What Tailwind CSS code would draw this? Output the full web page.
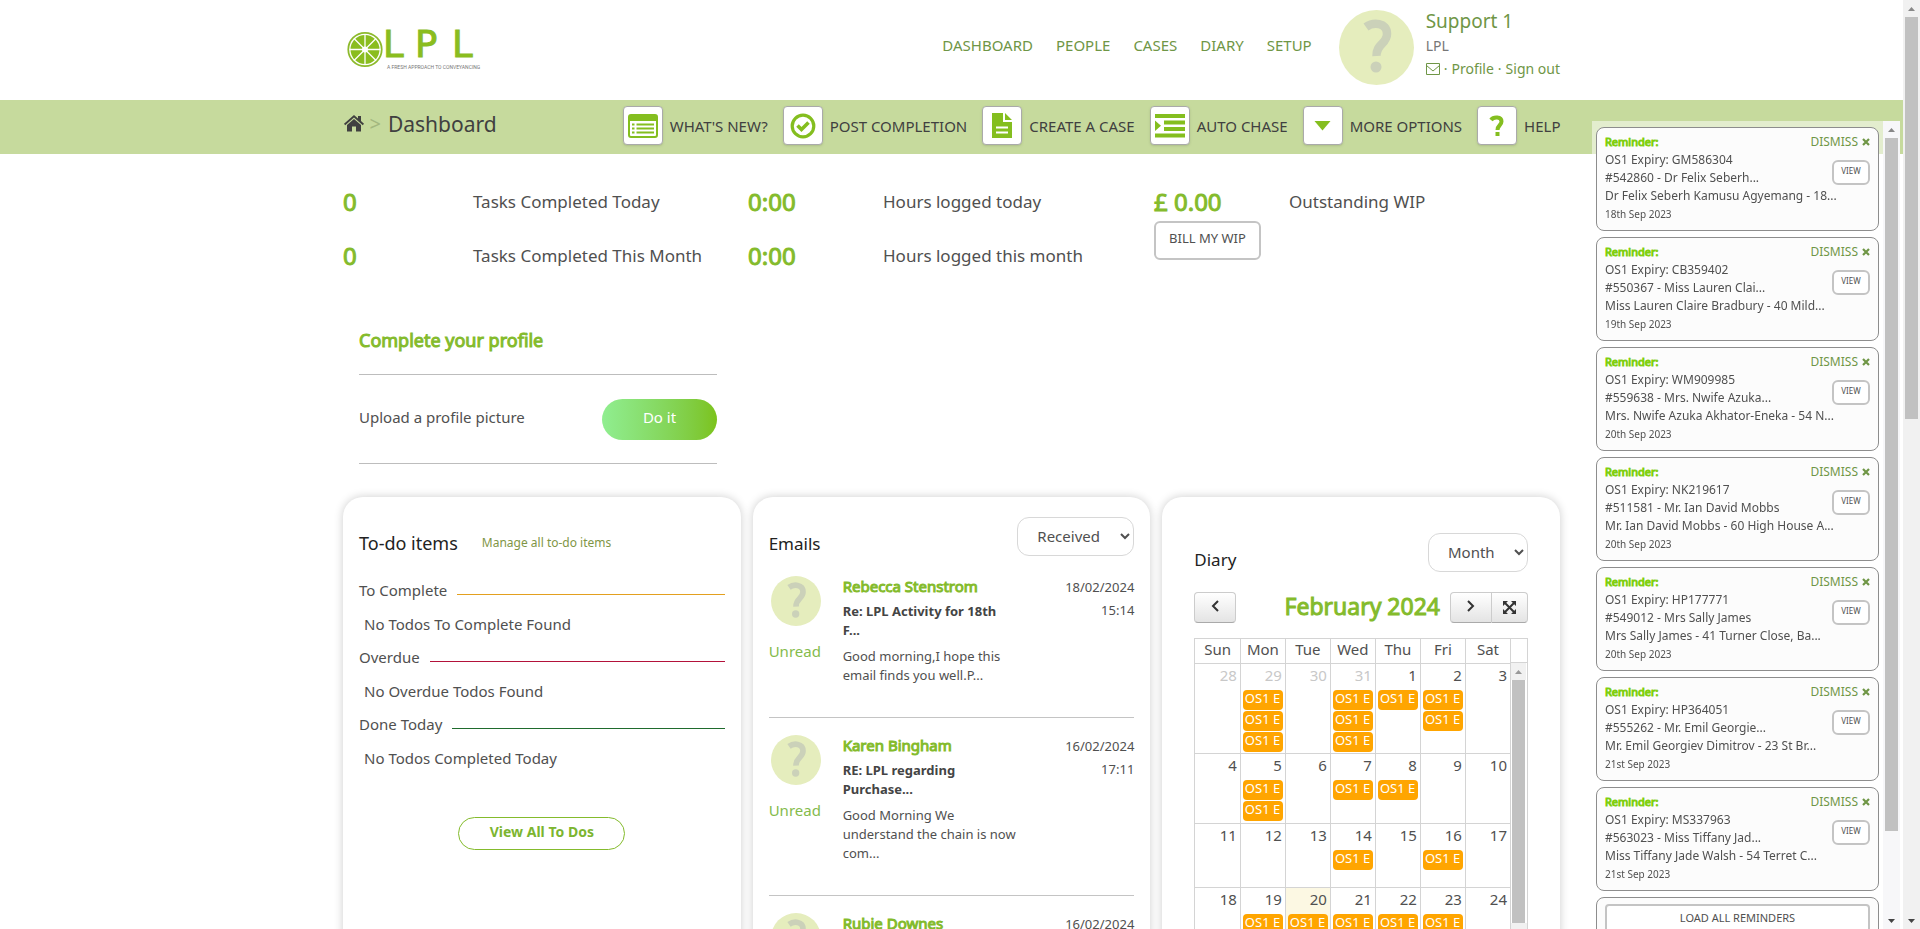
<!DOCTYPE html>
<html lang="en">
<head>
<meta charset="utf-8">
<title>LPL - Dashboard</title>
<script src="https://cdn.jsdelivr.net/npm/@tailwindcss/browser@4"></script>
</head>
<body class="h-screen overflow-hidden bg-white pr-[17px] font-['Noto_Sans','Open_Sans',sans-serif] text-[15px] leading-5 text-[#505050]">
<svg class="hidden">
  <symbol id="avatar" viewBox="0 0 75 75">
    <circle cx="37.5" cy="37.5" r="37.5" fill="#e5edbd"/>
    <path d="M27 17C34 12 48 12 48 24C48 34 37 34 37.500 46" fill="none" stroke="#cbd1b9" stroke-width="8.500"/>
    <circle cx="37" cy="57" r="5.500" fill="#cbd1b9"/>
  </symbol>
  <symbol id="cross" viewBox="0 0 8 8"><path d="M1 1L7 7M7 1L1 7" stroke="currentColor" stroke-width="2.200"/></symbol>
</svg>

<header class="mx-auto flex h-[100px] max-w-[1217px] items-start">
  <a href="#" aria-label="LPL home" class="mt-[29px] ml-1 flex">
    <svg width="36" height="42" viewBox="0 0 36 42">
      <circle cx="18" cy="20.500" r="16.700" fill="none" stroke="#8dba2c" stroke-width="1.800"/>
      <circle cx="18" cy="20.500" r="14.500" fill="#8abd1f"/>
      <g stroke="#fff" stroke-width="1.300">
        <path d="M18 5V36M2.500 20.500H33.500M7 9.500L29 31.500M29 9.500L7 31.500"/>
      </g>
      <circle cx="18" cy="20.500" r="3" fill="#fff"/>
    </svg>
    <div>
      <div class="flex font-['DejaVu_Sans'] text-[37px] leading-8 text-[#8abd1f] [-webkit-text-stroke:1px]"><span class="w-8">L</span><span class="w-[37px]">P</span><span>L</span></div>
      <p class="mt-[3px] ml-1 font-[Roboto] text-[5px] leading-[6px] whitespace-nowrap text-[#777]">A FRESH APPROACH TO CONVEYANCING</p>
    </div>
  </a>
  <nav class="mt-[35px] ml-auto flex gap-[23px] text-[#6f9646]">
    <a href="#">DASHBOARD</a><a href="#">PEOPLE</a><a href="#">CASES</a><a href="#">DIARY</a><a href="#">SETUP</a>
  </nav>
  <svg class="mt-[10px] ml-[27px] size-[75px]"><use href="#avatar"/></svg>
  <div class="ml-3 pt-2">
    <p class="text-[19px] leading-[26px] text-[#6f9646]">Support 1</p>
    <p class="text-sm leading-6 text-[#777]">LPL</p>
    <p class="flex items-center gap-1 text-sm leading-[22px] text-[#6f9646]">
      <a href="#" aria-label="Messages"><svg width="14" height="12" viewBox="0 0 14 12" fill="none" stroke="currentColor"><path d="M.5.5H13.500V11.500H.5ZM.5 2.500L7 8L13.500 2.500"/></svg></a>
      <span>·</span><a href="#">Profile</a><span>·</span><a href="#">Sign out</a>
    </p>
  </div>
</header>

<div class="-mr-[1px] bg-[#c6da9d]">
  <div class="mx-auto flex h-[54px] max-w-[1217px] items-center pb-[3px] text-[#404040]">
    <div class="flex items-center pb-1">
      <a href="#" aria-label="Home"><svg width="20" height="17" viewBox="0 0 20 17" fill="currentColor"><path d="M10 0L0 8.800L1.200 10.200L10 2.600L18.800 10.200L20 8.800L17 6.100V1H14V3.500ZM10 4L3 10V16.500H8V11.500H12V16.500H17V10Z"/></svg></a>
      <span class="ml-[6px] text-xl text-[#a3b77f]">&gt;</span>
      <h1 class="ml-[7px] text-[21px]">Dashboard</h1>
    </div>
    <div class="ml-auto flex gap-[15px]">
      <button class="flex items-center gap-[7px]"><span class="flex h-[39px] w-10 items-center justify-center rounded-sm border border-[#aaa] bg-white shadow"><svg width="30" height="24" viewBox="0 0 30 24"><rect x="1" y="1" width="28" height="22" rx="2" fill="none" stroke="#84be1f" stroke-width="2"/><path d="M1 2H29V7H1Z" fill="#84be1f"/><path d="M4 10.500H6.500M4 14.500H6.500M4 18.500H6.500M8.500 10.500H26M8.500 14.500H26M8.500 18.500H26" stroke="#84be1f" stroke-width="2"/></svg></span>WHAT'S NEW?</button>
      <button class="flex items-center gap-[7px]"><span class="flex h-[39px] w-10 items-center justify-center rounded-sm border border-[#aaa] bg-white shadow"><svg width="26" height="26" viewBox="0 0 26 26" fill="none" stroke="#84be1f"><circle cx="13" cy="13" r="10.800" stroke-width="3.200"/><path d="M7.500 12.500L11.500 16.500L18.500 9.500" stroke-width="3.600"/></svg></span>POST COMPLETION</button>
      <button class="flex items-center gap-[7px]"><span class="flex h-[39px] w-10 items-center justify-center rounded-sm border border-[#aaa] bg-white shadow"><svg width="22" height="25" viewBox="0 0 22 25" fill="#84be1f"><path d="M1 0H12V9H21V25H1ZM14 0L21 7H14Z"/><path d="M5 14.500H17M5 19.500H17" stroke="#fff" stroke-width="2"/></svg></span>CREATE A CASE</button>
      <button class="flex items-center gap-[7px]"><span class="flex h-[39px] w-10 items-center justify-center rounded-sm border border-[#aaa] bg-white shadow"><svg width="30" height="24" viewBox="0 0 30 24" fill="#84be1f"><path d="M0 0H30V4H0ZM9 6.500H30V10.500H9ZM9 13H30V17H9ZM0 19.500H30V23.500H0ZM0 6.500L6 11.700L0 17Z"/></svg></span>AUTO CHASE</button>
      <button class="flex items-center gap-[7px]"><span class="flex h-[39px] w-10 items-center justify-center rounded-sm border border-[#aaa] bg-white shadow"><svg width="17" height="10" viewBox="0 0 17 10" fill="#84be1f"><path d="M.5 0H16.500L8.500 9.500Z"/></svg></span>MORE OPTIONS</button>
      <button class="flex items-center gap-[7px]"><span class="flex h-[39px] w-10 items-center justify-center rounded-sm border border-[#aaa] bg-white shadow"><svg width="16" height="22" viewBox="0 0 16 22"><path d="M2 5C4.500 1.500 12.500 1.500 12.500 6.500C12.500 10.500 8.500 10 8.500 15" fill="none" stroke="#84be1f" stroke-width="4"/><path d="M6.500 17H10.500V21H6.500Z" fill="#84be1f"/></svg></span>HELP</button>
    </div>
  </div>
</div>

<main class="mx-auto max-w-[1217px]">
  <section class="flex pt-[29px] text-[17px]">
    <dl class="grid w-[405px] grid-cols-[130px_1fr] gap-y-4">
      <dt class="text-2xl leading-[38px] text-[#84bb2c] [-webkit-text-stroke:1px]">0</dt><dd class="leading-[38px]">Tasks Completed Today</dd>
      <dt class="text-2xl leading-[38px] text-[#84bb2c] [-webkit-text-stroke:1px]">0</dt><dd class="leading-[38px]">Tasks Completed This Month</dd>
    </dl>
    <dl class="grid w-[406px] grid-cols-[135px_1fr] gap-y-4">
      <dt class="text-2xl leading-[38px] text-[#84bb2c] [-webkit-text-stroke:1px]">0:00</dt><dd class="leading-[38px]">Hours logged today</dd>
      <dt class="text-2xl leading-[38px] text-[#84bb2c] [-webkit-text-stroke:1px]">0:00</dt><dd class="leading-[38px]">Hours logged this month</dd>
    </dl>
    <dl class="grid w-[405px] grid-cols-[135px_1fr] content-start">
      <dt class="text-2xl leading-[38px] text-[#84bb2c] [-webkit-text-stroke:1px]">£ 0.00</dt><dd class="leading-[38px]">Outstanding WIP</dd>
      <dd><button class="block h-[39px] w-[107px] rounded-md border-2 border-[#c4c4c4] pb-1 text-[13px] leading-none">BILL MY WIP</button></dd>
    </dl>
  </section>

  <section class="mt-[53px] ml-4 w-[358px]">
    <h2 class="border-b border-[#bdbdbd] pb-[22px] text-lg leading-6 text-[#84bb2c] [-webkit-text-stroke:1px]">Complete your profile</h2>
    <div class="flex h-[89px] items-center justify-between border-b border-[#bdbdbd]">
      <span class="pb-1">Upload a profile picture</span>
      <button class="h-[41px] w-[115px] rounded-full bg-linear-to-r from-[#90ee90] to-[#7cc31a] pb-1 text-white">Do it</button>
    </div>
  </section>

  <div class="mt-[33px] grid grid-cols-3 gap-3">
    <section class="h-[600px] rounded-[20px] bg-white px-4 pt-[34px] shadow-[0_0_10px_rgba(0,0,0,0.2)]">
      <div class="flex items-center gap-6"><h2 class="text-lg leading-6 text-[#222]">To-do items</h2><a href="#" class="text-xs text-[#7f9646]">Manage all to-do items</a></div>
      <div class="mt-[25px] flex items-center gap-[10px]"><h3>To Complete</h3><span class="mt-2 h-px flex-1 bg-[#e3a01f]"></span></div>
      <p class="mt-[14px] mb-[13px] pl-[5px]">No Todos To Complete Found</p>
      <div class="flex items-center gap-[10px]"><h3>Overdue</h3><span class="mt-2 h-px flex-1 bg-[#b3123a]"></span></div>
      <p class="mt-[14px] mb-[13px] pl-[5px]">No Overdue Todos Found</p>
      <div class="flex items-center gap-[10px]"><h3>Done Today</h3><span class="mt-2 h-px flex-1 bg-[#1f6b2d]"></span></div>
      <p class="mt-[14px] mb-[13px] pl-[5px]">No Todos Completed Today</p>
      <button class="mx-auto mt-[49px] block h-[33px] w-[167px] rounded-full border border-[#84bb2c] pb-[3px] text-sm leading-none font-bold text-[#7cb530]">View All To Dos</button>
    </section>

    <section class="h-[600px] rounded-[20px] bg-white px-4 pt-[20px] shadow-[0_0_10px_rgba(0,0,0,0.2)]">
      <div class="flex h-[39px] items-end justify-between">
        <h2 class="text-[17px] leading-6 text-[#222]">Emails</h2>
        <select aria-label="Email folder" class="h-[39px] w-[117px] rounded-xl border border-[#d8d8d8] bg-white pb-[2px] pl-[15px]"><option>Received</option></select>
      </div>
      <div id="emails" class="mt-5"></div>
    </section>

    <section class="h-[600px] rounded-[20px] bg-white px-8 pt-[36px] shadow-[0_0_10px_rgba(0,0,0,0.2)]">
      <div class="flex h-[39px] items-end justify-between">
        <h2 class="text-[17px] leading-6 text-[#222]">Diary</h2>
        <select aria-label="Diary view" class="h-[39px] w-[100px] rounded-xl border border-[#d8d8d8] bg-white pb-[2px] pl-[15px]"><option>Month</option></select>
      </div>
      <div class="mt-5 flex h-[31px] items-center">
        <button aria-label="Previous month" class="flex h-[31px] w-[42px] items-center justify-center rounded border border-[#ccc] border-b-[#aaa] bg-linear-to-b from-white to-[#e4e4e4] pb-1"><svg width="8" height="12" viewBox="0 0 8 12" fill="none" stroke="#333" stroke-width="2"><path d="M7 1L2 6L7 11"/></svg></button>
        <h3 class="ml-auto pb-1 text-[23px] text-[#84bb2c] [-webkit-text-stroke:1px]">February 2024</h3>
        <button aria-label="Next month" class="ml-[10px] flex h-[31px] w-[42px] items-center justify-center rounded-l border border-[#ccc] border-b-[#aaa] bg-linear-to-b from-white to-[#e4e4e4] pb-1"><svg width="8" height="12" viewBox="0 0 8 12" fill="none" stroke="#333" stroke-width="2"><path d="M1 1L6 6L1 11"/></svg></button>
        <button aria-label="Full screen" class="flex h-[31px] w-9 items-center justify-center rounded-r border border-l-0 border-[#ccc] border-b-[#aaa] bg-linear-to-b from-white to-[#e4e4e4]"><svg width="13" height="13" viewBox="0 0 13 13"><path d="M2 2L11 11M11 2L2 11" stroke="#333" stroke-width="2"/><path d="M0 0H5L0 5ZM13 0V5L8 0ZM0 13V8L5 13ZM13 13H8L13 8Z" fill="#333"/></svg></button>
      </div>
      <div class="mt-[15px] flex items-start border border-[#d4d4d4]">
        <table class="w-full min-w-0 flex-1 table-fixed border-collapse"><thead><tr id="days"></tr></thead><tbody id="weeks"></tbody></table>
        <div class="w-4">
          <div class="h-6 border-b border-[#d4d4d4]"></div>
          <div class="flex h-[17px] w-[15px] items-center justify-center bg-[#f1f1f1]"><svg width="7" height="4" viewBox="0 0 7 4"><path d="M3.500 0L7 4H0Z" fill="#999"/></svg></div>
          <div class="ml-px h-[243px] w-[13px] bg-[#c1c1c1]"></div>
          <div class="h-8 bg-[#f1f1f1]"></div>
        </div>
      </div>
    </section>
  </div>
</main>

<aside class="fixed top-[121px] right-5 bottom-0 flex w-[308px] bg-white/50 pl-1">
  <div class="w-[283px] pt-[6px] text-xs leading-[18px]">
    <div id="reminders"></div>
    <div class="h-[104px] rounded-lg border border-[#8d8d8d] bg-[#fcfcfc] px-2 pt-[6px]"><button class="block h-[34px] w-full rounded border-2 border-[#c4c4c4] bg-white pb-2 text-[11px] leading-none">LOAD ALL REMINDERS</button></div>
  </div>
  <div class="ml-auto flex w-[17px] flex-col items-center bg-[#f7f7f9]">
    <div class="flex h-[17px] items-center"><svg width="7" height="4" viewBox="0 0 7 4"><path d="M3.500 0L7 4H0Z" fill="#888"/></svg></div>
    <div class="h-[693px] w-[13px] bg-[#c1c1c1]"></div>
    <div class="mt-auto flex h-[17px] items-center"><svg width="7" height="4" viewBox="0 0 7 4"><path d="M0 0H7L3.500 4Z" fill="#444"/></svg></div>
  </div>
</aside>

<div class="fixed top-0 right-0 flex h-full w-[17px] flex-col items-center bg-[#f1f1f1]">
  <div class="flex h-[17px] items-center"><svg width="7" height="4" viewBox="0 0 7 4"><path d="M3.500 0L7 4H0Z" fill="#888"/></svg></div>
  <div class="h-[402px] w-[13px] bg-[#c1c1c1]"></div>
  <div class="mt-auto flex h-[17px] items-center"><svg width="7" height="4" viewBox="0 0 7 4"><path d="M0 0H7L3.500 4Z" fill="#444"/></svg></div>
</div>

<script>
const put = (id, html) => { document.getElementById(id).innerHTML = html; };

put('reminders', [
  ['GM586304', '#542860 - Dr Felix Seberh...', 'Dr Felix Seberh Kamusu Agyemang - 18...', '18th Sep 2023'],
  ['CB359402', '#550367 - Miss Lauren Clai...', 'Miss Lauren Claire Bradbury - 40 Mild...', '19th Sep 2023'],
  ['WM909985', '#559638 - Mrs. Nwife Azuka...', 'Mrs. Nwife Azuka Akhator-Eneka - 54 N...', '20th Sep 2023'],
  ['NK219617', '#511581 - Mr. Ian David Mobbs', 'Mr. Ian David Mobbs - 60 High House A...', '20th Sep 2023'],
  ['HP177771', '#549012 - Mrs Sally James', 'Mrs Sally James - 41 Turner Close, Ba...', '20th Sep 2023'],
  ['HP364051', '#555262 - Mr. Emil Georgie...', 'Mr. Emil Georgiev Dimitrov - 23 St Br...', '21st Sep 2023'],
  ['MS337963', '#563023 - Miss Tiffany Jad...', 'Miss Tiffany Jade Walsh - 54 Terret C...', '21st Sep 2023'],
].map(([ref, matter, who, date]) => `
  <article class="relative mb-[6px] h-[104px] rounded-lg border border-[#8d8d8d] bg-[#fcfcfc] px-2 pt-[5px]">
    <div class="flex items-center justify-between leading-[18px]"><strong class="text-[11px] font-normal text-[#7fcf10] [-webkit-text-stroke:1px]">Reminder:</strong>
      <button class="flex items-center gap-1 text-[#6f9646]">DISMISS <svg class="size-2"><use href="#cross"/></svg></button></div>
    <p>OS1 Expiry: ${ref}</p><p>${matter}</p><p class="whitespace-nowrap">${who}</p>
    <p class="text-[10px]">${date}</p>
    <button class="absolute top-8 right-2 h-[25px] w-[38px] rounded-md border-2 border-[#c4c4c4] bg-white pb-[3px] text-[8px] leading-none">VIEW</button>
  </article>`).join(''));

put('emails', [
  ['Rebecca Stenstrom', 'Re: LPL Activity for 18th F...', 'Good morning,I hope this email finds you well.P...', '18/02/2024', '15:14'],
  ['Karen Bingham', 'RE: LPL regarding Purchase...', 'Good Morning We understand the chain is now com...', '16/02/2024', '17:11'],
  ['Rubie Downes', '', '', '16/02/2024', ''],
].map(([from, subject, body, date, time]) => `
  <article class="mb-[17px] flex border-b border-[#c4c4c4] pb-[32px]">
    <div class="w-[74px]"><svg class="ml-[2px] size-[50px]"><use href="#avatar"/></svg>${subject && '<p class="mt-[15px] text-[#84bb4c]">Unread</p>'}</div>
    <div class="w-[184px]"><h4 class="text-[#84bb2c] [-webkit-text-stroke:1px]">${from}</h4>
      <p class="mt-[6px] w-[170px] text-[13px] leading-[19px] font-bold text-[#444]">${subject}</p>
      <p class="mt-[7px] text-[13px] leading-[19px]">${body}</p></div>
    <div class="ml-auto text-right text-[13px] leading-[23px]"><p>${date}</p><p>${time}</p></div>
  </article>`).join(''));

put('days', ['Sun', 'Mon', 'Tue', 'Wed', 'Thu', 'Fri', 'Sat'].map(d =>
  `<th class="h-6 border-r border-b border-[#d4d4d4] p-0 pb-[3px] font-normal">${d}</th>`).join(''));

/* Each entry: day number followed by the number of diary entries on that day. */
const rows = [
  ['h-[90px]', [[28, 0], [29, 3], [30, 0], [31, 3], [1, 1], [2, 2], [3, 0]]],
  ['h-[70px]', [[4, 0], [5, 2], [6, 0], [7, 1], [8, 1], [9, 0], [10, 0]]],
  ['h-[64px]', [[11, 0], [12, 0], [13, 0], [14, 1], [15, 0], [16, 1], [17, 0]]],
  ['h-[70px]', [[18, 0], [19, 1], [20, 1], [21, 1], [22, 1], [23, 1], [24, 0]]],
];
put('weeks', rows.map(([height, cells], w) => `<tr class="${height}">` + cells.map(([n, count]) =>
  `<td class="border-r border-b border-[#d4d4d4] px-[2px] py-0 align-top ${n === 20 ? 'bg-[#fcf8e3]' : ''}">
    <div class="mb-[3px] pr-px text-right leading-[23px] ${w === 0 && n > 20 ? 'text-[#c8c8c8]' : ''}">${n}</div>
    ${'<div class="mb-px h-5 overflow-hidden rounded bg-[#ffa500] pl-[2px] text-[13px] leading-4 whitespace-nowrap text-white">OS1 E</div>'.repeat(count)}
  </td>`).join('') + '</tr>').join(''));
</script>
</body>
</html>
